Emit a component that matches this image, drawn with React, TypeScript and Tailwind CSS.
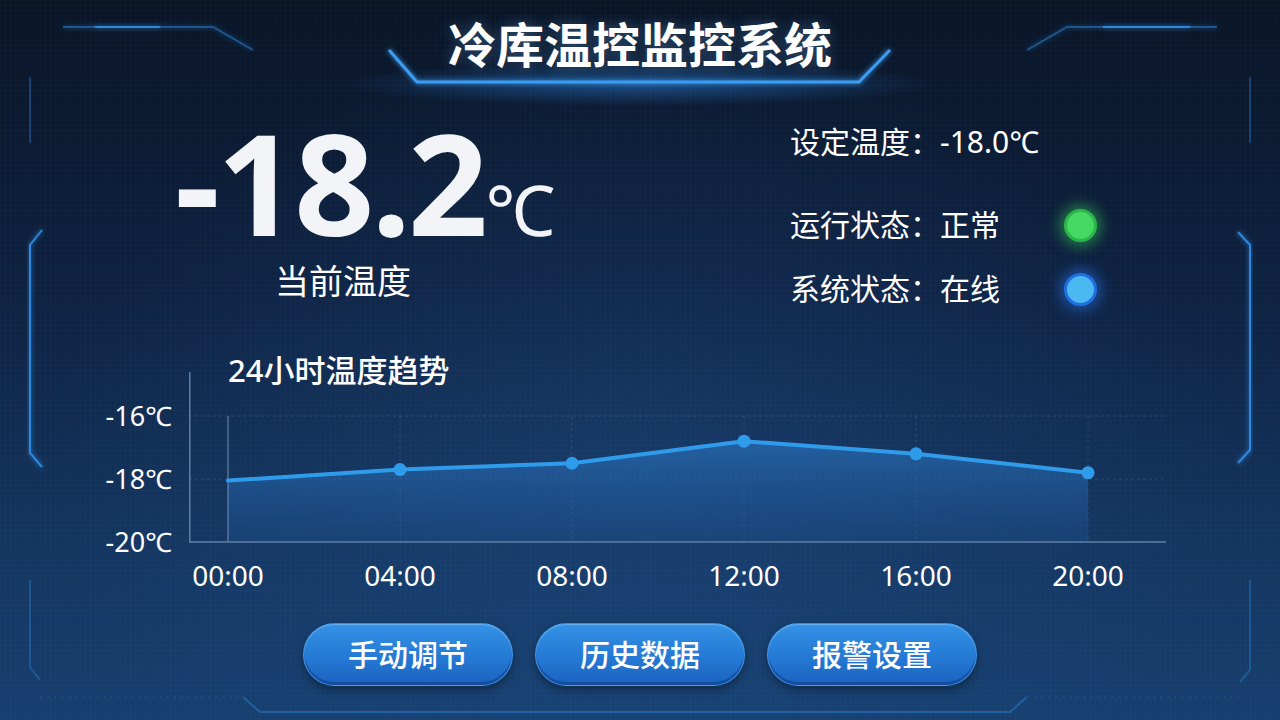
import React from 'react';

const TREND = [
  { time: '00:00', temp: -18.05 },
  { time: '04:00', temp: -17.7 },
  { time: '08:00', temp: -17.5 },
  { time: '12:00', temp: -16.8 },
  { time: '16:00', temp: -17.2 },
  { time: '20:00', temp: -17.8 },
];

const ACTIONS = ['手动调节', '历史数据', '报警设置'];

function Frame() {
  return (
    <svg className="absolute inset-0 pointer-events-none" width="1280" height="720" viewBox="0 0 1280 720">
      <defs>
        <filter id="glow" x="-20%" y="-20%" width="140%" height="140%">
          <feGaussianBlur stdDeviation="2.5" result="b" />
          <feMerge>
            <feMergeNode in="b" />
            <feMergeNode in="SourceGraphic" />
          </feMerge>
        </filter>
        <radialGradient id="headGlow" cx="0.5" cy="0.5" r="0.5">
          <stop offset="0" stopColor="#2d8cf0" stopOpacity="0.45" />
          <stop offset="1" stopColor="#2d8cf0" stopOpacity="0" />
        </radialGradient>
        <linearGradient id="fadeL" x1="0" y1="0" x2="1" y2="0">
          <stop offset="0" stopColor="#2f8fe8" stopOpacity="0.1" />
          <stop offset="1" stopColor="#3a9cf2" stopOpacity="1" />
        </linearGradient>
        <linearGradient id="fadeR" x1="0" y1="0" x2="1" y2="0">
          <stop offset="0" stopColor="#3a9cf2" stopOpacity="1" />
          <stop offset="1" stopColor="#2f8fe8" stopOpacity="0.1" />
        </linearGradient>
      </defs>

      {/* header glow + line */}
      <ellipse cx="640" cy="84" rx="300" ry="22" fill="url(#headGlow)" />
      <g filter="url(#glow)" fill="none" strokeWidth="3">
        <path d="M225,50 L389,50" stroke="url(#fadeL)" />
        <path d="M389,50 L417,82 L859,82 L890,50" stroke="#3a9cf2" />
        <path d="M890,50 L1050,50" stroke="url(#fadeR)" />
      </g>

      {/* top corners */}
      <g fill="none" stroke="#2f8fe8" strokeWidth="2" filter="url(#glow)">
        <path d="M63,27 L213,27 L253,50" strokeOpacity="0.45" />
        <path d="M95,27 L160,27" strokeOpacity="0.85" />
        <path d="M1027,50 L1067,27 L1217,27" strokeOpacity="0.45" />
        <path d="M1103,27 L1190,27" strokeOpacity="0.85" />
      </g>

      {/* side brackets */}
      <g fill="none" stroke="#2f8fe8" strokeWidth="2">
        <path d="M30,77 L30,143" strokeOpacity="0.35" />
        <path d="M1250,77 L1250,143" strokeOpacity="0.35" />
        <path d="M42,230 L30,245 L30,453 L42,467" strokeOpacity="0.9" filter="url(#glow)" />
        <path d="M1238,232 L1250,245 L1250,450 L1238,463" strokeOpacity="0.9" filter="url(#glow)" />
        <path d="M30,580 L30,667 L40,680" strokeOpacity="0.35" />
        <path d="M1250,580 L1250,670 L1240,682" strokeOpacity="0.35" />
        <path d="M243,697 L260,712 L1010,712 L1027,697" strokeOpacity="0.4" />
        <path d="M40,697 L243,697 M1027,697 L1240,697" strokeOpacity="0.12" strokeDasharray="3 4" />
      </g>
    </svg>
  );
}

function TrendChart() {
  const pts = TREND.map((d, i) => [39 + i * 172, 44 + (-16 - d.temp) * 31.5]);
  const line = pts.map(([x, y], i) => `${i ? 'L' : 'M'}${x},${y.toFixed(1)}`).join(' ');
  const area = `${line} L${pts[pts.length - 1][0]},170 L${pts[0][0]},170 Z`;

  return (
    <svg width="981" height="175" viewBox="0 0 981 175" className="block shrink-0">
      <defs>
        <linearGradient id="area" x1="0" y1="0" x2="0" y2="1">
          <stop offset="0" stopColor="#2a72bd" stopOpacity="0.7" />
          <stop offset="1" stopColor="#1d5596" stopOpacity="0.3" />
        </linearGradient>
      </defs>
      <g stroke="#9fb8d8" strokeOpacity="0.18" strokeDasharray="3 3" strokeWidth="1">
        <line x1="0" y1="44" x2="977" y2="44" />
        <line x1="0" y1="107" x2="977" y2="107" />
        {pts.slice(1).map(([x]) => (
          <line key={x} x1={x} y1="44" x2={x} y2="170" />
        ))}
      </g>
      <path d={area} fill="url(#area)" />
      <line x1="39" y1="44" x2="39" y2="170" stroke="#8aa4c4" strokeOpacity="0.55" strokeWidth="1.5" />
      <path d={line} fill="none" stroke="#2f9ceb" strokeWidth="4" strokeLinejoin="round" strokeLinecap="round" />
      {pts.slice(1).map(([x, y]) => (
        <circle key={x} cx={x} cy={y} r="6.5" fill="#2f9ceb" />
      ))}
      <line x1="0.75" y1="0" x2="0.75" y2="170" stroke="#5f7fa6" strokeWidth="1.5" />
      <line x1="0" y1="170" x2="977" y2="170" stroke="#5f7fa6" strokeWidth="1.5" />
    </svg>
  );
}

export default function App() {
  return (
    <div className="relative w-[1280px] h-[720px] overflow-hidden bg-[linear-gradient(180deg,#0a1526_0%,#0e2140_40%,#14355f_75%,#173f6f_100%)] font-['Noto_Sans','Noto_Sans_CJK_SC',sans-serif] text-white">
      <div className="absolute inset-0 bg-[radial-gradient(ellipse_at_50%_65%,rgba(40,100,170,0.22),transparent_65%)]" />
      <div className="absolute inset-0 opacity-50 bg-[linear-gradient(rgba(120,170,230,0.05)_1px,transparent_1px),linear-gradient(90deg,rgba(120,170,230,0.05)_1px,transparent_1px)] bg-[size:5px_5px]" />
      <Frame />

      <div className="relative flex flex-col">
        <header className="h-[100px] flex justify-center pt-[16px]">
          <h1 className="text-[48px] leading-[58px] font-bold [text-shadow:0_0_14px_rgba(120,190,255,0.35)]">
            冷库温控监控系统
          </h1>
        </header>

        <section className="h-[230px] flex">
          <div className="w-[790px] pl-[175px] pt-[27px] flex flex-col">
            <div className="flex items-baseline h-[110px]">
              <span className="text-[140px] leading-[110px] font-bold tracking-[-0.02em] text-[#f2f4f7]">-18.2</span>
              <span className="text-[70px] leading-[70px] text-[#f2f4f7]">℃</span>
            </div>
            <div className="mt-[24px] ml-[100px] text-[34px] leading-[41px]">当前温度</div>
          </div>

          <div className="w-[307px] pt-[24px] flex flex-col text-[30px] leading-[36px]">
            <div>设定温度：-18.0℃</div>
            <div className="mt-[47px] h-[36px] flex items-center justify-between">
              <span>运行状态：正常</span>
              <span className="w-[33px] h-[33px] rounded-full bg-[#45d862] border-[3px] border-[#2bb64a] shadow-[0_0_14px_4px_rgba(60,220,90,0.5)]" />
            </div>
            <div className="mt-[28px] h-[36px] flex items-center justify-between">
              <span>系统状态：在线</span>
              <span className="w-[33px] h-[33px] rounded-full bg-[#4bb8f2] border-[3px] border-[#1f6fe0] shadow-[0_0_14px_4px_rgba(40,120,240,0.55)]" />
            </div>
          </div>
        </section>

        <section className="flex flex-col pt-[22px]">
          <div className="relative ml-[228px] -mb-[16px] text-[31px] leading-[36px] font-medium">24小时温度趋势</div>
          <div className="flex gap-[17px]">
            <div className="w-[172px] pt-[29px] flex flex-col items-end gap-[33px] text-[27px] leading-[30px]">
              <span>-16℃</span>
              <span>-18℃</span>
              <span>-20℃</span>
            </div>
            <TrendChart />
          </div>
          <div className="ml-[142px] mt-[2px] flex text-[28px] leading-[32px]">
            {TREND.map((d) => (
              <span key={d.time} className="w-[172px] text-center">{d.time}</span>
            ))}
          </div>
        </section>

        <div className="mt-[32px] flex justify-center gap-[22px]">
          {ACTIONS.map((label) => (
            <button
              key={label}
              className="w-[210px] h-[63px] rounded-full border border-[#4ea6f2]/60 bg-[linear-gradient(180deg,#3592e6_0%,#2479d4_55%,#1b62bf_100%)] shadow-[0_4px_10px_rgba(0,0,0,0.35),inset_0_1px_0_rgba(255,255,255,0.25),inset_0_-3px_0_rgba(10,50,120,0.45)] text-[30px] font-medium text-white"
            >
              {label}
            </button>
          ))}
        </div>
      </div>
    </div>
  );
}
